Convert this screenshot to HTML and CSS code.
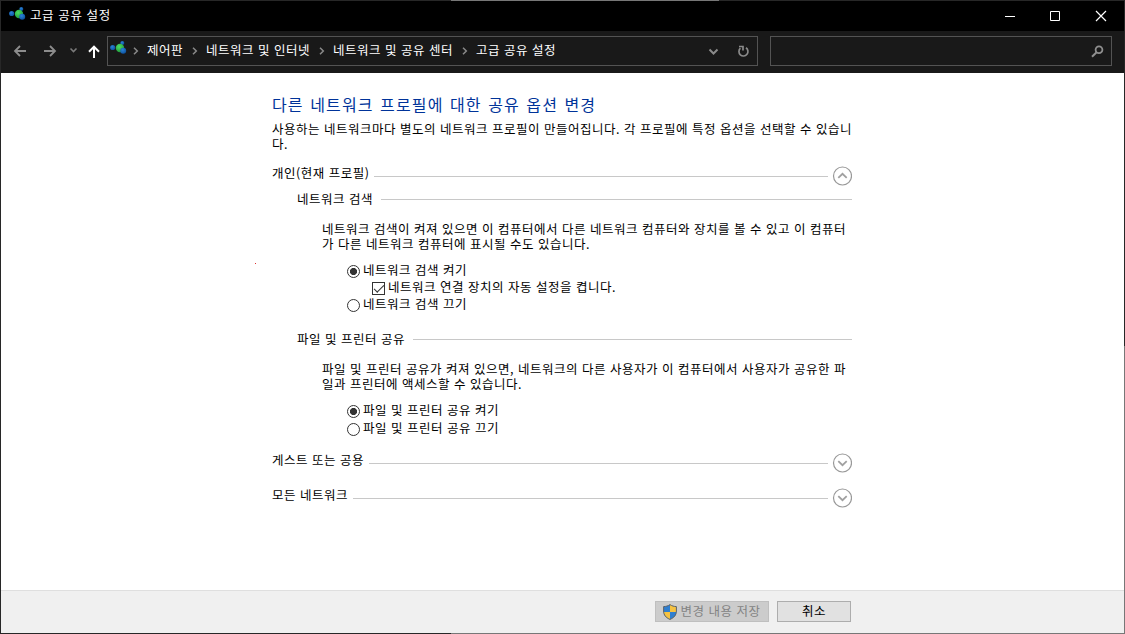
FILE: index.html
```
<!DOCTYPE html>
<html lang="ko">
<head>
    <meta charset="UTF-8">
    <meta name="viewport" content="width=device-width, initial-scale=1.0">
    <title>고급 공유 설정</title>
    <link rel="stylesheet" href="styles.css">
</head>
<body>

    <svg class="symbols" aria-hidden="true">
        <defs>
            <radialGradient id="green" cx=".4" cy=".35" r=".7"><stop offset="0" stop-color="#4fdc62"/><stop offset="1" stop-color="#1c9a3c"/></radialGradient>
            <radialGradient id="blue" cx=".4" cy=".35" r=".7"><stop offset="0" stop-color="#2b83d6"/><stop offset="1" stop-color="#0c4f9c"/></radialGradient>
        </defs>
        <symbol id="network" viewBox="0 0 17 14">
            <circle cx="12.3" cy="2" r="2" fill="url(#blue)"/>
            <circle cx="2.7" cy="6.5" r="2.6" fill="url(#blue)"/>
            <circle cx="10" cy="7" r="4.2" fill="url(#green)"/>
            <circle cx="13.2" cy="9.7" r="3" fill="url(#blue)"/>
        </symbol>
        <symbol id="crumb" viewBox="0 0 6 8">
            <path d="M1 .8 4.3 4 1 7.2" fill="none" stroke="#8a8a8a" stroke-width="1.5"/>
        </symbol>
        <symbol id="down" viewBox="0 0 20 20">
            <circle cx="10.5" cy="10" r="9" fill="#fff" stroke="#999" stroke-width="1.2"/>
            <path d="M6.300 8.200 10.500 12.200 14.700 8.200" fill="none" stroke="#a0a0a0" stroke-width="1.8"/>
        </symbol>
        <symbol id="up" viewBox="0 0 20 20">
            <circle cx="10.5" cy="10" r="9" fill="#fff" stroke="#999" stroke-width="1.2"/>
            <path d="M6.300 11.800 10.500 7.800 14.700 11.800" fill="none" stroke="#a0a0a0" stroke-width="1.8"/>
        </symbol>
    </svg>

    <div class="window">
        <header class="titlebar">
            <svg class="app-icon" width="17" height="14"><use href="#network"/></svg>
            <h1>고급 공유 설정</h1>
            <svg class="controls" width="104" height="12" viewBox="0 0 104 12" fill="none" stroke="#fff">
                <path d="M0 6.5h10M45.5 1.5h9v9h-9z"/>
                <path d="M91 1 101 11M101 1 91 11" stroke-width="1.2"/>
            </svg>
        </header>

        <nav class="toolbar">
            <svg class="arrows" width="88" height="16" viewBox="0 0 88 16" fill="none">
                <path d="M14 8H3M8 3 3 8l5 5M32 8h11M38 3l5 5-5 5" stroke="#8c8c8c" stroke-width="1.8"/>
                <path d="M58.500 5.500 61.500 8.500 64.500 5.500" stroke="#7a7a7a" stroke-width="1.6"/>
                <path d="M82 15V4M77 8.700 82 3.700l5 5" stroke="#fff" stroke-width="2"/>
            </svg>
            <div class="address">
                <svg class="addr-icon" width="17" height="14"><use href="#network"/></svg>
                <svg class="sep" width="6" height="8"><use href="#crumb"/></svg>
                <span>제어판</span>
                <svg class="sep" width="6" height="8"><use href="#crumb"/></svg>
                <span>네트워크 및 인터넷</span>
                <svg class="sep" width="6" height="8"><use href="#crumb"/></svg>
                <span>네트워크 및 공유 센터</span>
                <svg class="sep" width="6" height="8"><use href="#crumb"/></svg>
                <span>고급 공유 설정</span>
                <svg class="addr-tools" width="44" height="28" viewBox="0 0 44 28" fill="none" stroke="#8a8a8a">
                    <path d="M1.500 12.500 5.500 16.500 9.500 12.500" stroke-width="2"/>
                    <path d="M38 10.800A4.500 4.500 0 1 1 32.400 11.200M31 9.500h4v4" stroke-width="1.7"/>
                </svg>
            </div>
            <div class="search">
                <svg width="13" height="13" viewBox="0 0 13 13" fill="none" stroke="#8f8f8f">
                    <circle cx="8" cy="4.8" r="3.4" stroke-width="1.8"/>
                    <path d="M5.6 7.2 1 11.8" stroke-width="2"/>
                </svg>
            </div>
        </nav>

        <main>
            <div class="content">
                <h2>다른 네트워크 프로필에 대한 공유 옵션 변경</h2>
                <p class="intro">사용하는 네트워크마다 별도의 네트워크 프로필이 만들어집니다. 각 프로필에 특정 옵션을 선택할 수 있습니<br>다.</p>

                <!-- 개인 프로필 -->
                <div class="profile">
                    <span>개인(현재 프로필)</span><i></i>
                    <svg width="20" height="20"><use href="#up"/></svg>
                </div>

                <section>
                    <div class="group"><span>네트워크 검색</span><i></i></div>
                    <p>네트워크 검색이 켜져 있으면 이 컴퓨터에서 다른 네트워크 컴퓨터와 장치를 볼 수 있고 이 컴퓨터<br>가 다른 네트워크 컴퓨터에 표시될 수도 있습니다.</p>
                    <div class="options tight">
                        <label><input type="radio" name="discovery" checked>네트워크 검색 켜기</label>
                        <label class="sub"><input type="checkbox" checked>네트워크 연결 장치의 자동 설정을 켭니다.</label>
                        <label><input type="radio" name="discovery">네트워크 검색 끄기</label>
                    </div>
                </section>

                <section>
                    <div class="group"><span>파일 및 프린터 공유</span><i></i></div>
                    <p>파일 및 프린터 공유가 켜져 있으면, 네트워크의 다른 사용자가 이 컴퓨터에서 사용자가 공유한 파<br>일과 프린터에 액세스할 수 있습니다.</p>
                    <div class="options">
                        <label><input type="radio" name="sharing" checked>파일 및 프린터 공유 켜기</label>
                        <label><input type="radio" name="sharing">파일 및 프린터 공유 끄기</label>
                    </div>
                </section>

                <!-- 접힌 프로필 -->
                <div class="profile">
                    <span>게스트 또는 공용</span><i></i>
                    <svg width="20" height="20"><use href="#down"/></svg>
                </div>
                <div class="profile">
                    <span>모든 네트워크</span><i></i>
                    <svg width="20" height="20"><use href="#down"/></svg>
                </div>
            </div>
        </main>

        <footer>
            <button class="save" disabled>
                <svg width="14" height="16" viewBox="0 0 14 16">
                    <path d="M7 .5C5 2 3 2.500.6 2.600V7C.6 11 3 13.800 7 15.500Z" fill="#2f7fd0"/>
                    <path d="M7 .5C9 2 11 2.500 13.400 2.600V7C13.400 11 11 13.800 7 15.500Z" fill="#f5c242"/>
                    <path d="M.6 8H7v7.500C3.200 13.800.900 11.500.6 8Z" fill="#f5c242"/>
                    <path d="M13.400 8H7v7.500C10.800 13.800 13.100 11.500 13.400 8Z" fill="#2f7fd0"/>
                    <path d="M7 .6C5 2 3 2.500.6 2.600V7C.6 11 3 13.800 7 15.400 11 13.800 13.400 11 13.400 7V2.600C11 2.500 9 2 7 .6Z" fill="none" stroke="#5c6368"/>
                </svg>
                <span>변경 내용 저장</span>
            </button>
            <button><span>취소</span></button>
        </footer>
    </div>

</body>
</html>
```
FILE: styles.css
```
* {
    box-sizing: border-box;
}
body {
    margin: 0;
    font-family: "Noto Sans CJK KR", sans-serif;
    font-size: 12.5px;
    line-height: 15px;
    letter-spacing: 0.5px;
    color: #000;
    white-space: nowrap;
}
h1, h2, p {
    margin: 0;
    font-size: 12.5px;
    font-weight: normal;
}
svg {
    display: block;
    flex: none;
}
.symbols {
    position: absolute;
    width: 0;
    height: 0;
}
.window {
    display: flex;
    flex-direction: column;
    width: 1125px;
    height: 634px;
    padding: 1px;
    /* borde: tramos claros arriba, a la derecha y abajo */
    background:
        linear-gradient(#777, #777) 451px 0 / 268px 1px no-repeat,
        linear-gradient(#777, #777) 1124px 346px / 1px 288px no-repeat,
        linear-gradient(#777, #777) 451px 633px / 674px 1px no-repeat,
        #272727;
}

/* Barra de título */
.titlebar {
    display: flex;
    align-items: center;
    height: 30px;
    padding: 0 15px 0 8px;
    background: #000;
    color: #fff;
}
.titlebar h1 {
    margin-left: 4px;
    padding-bottom: 3px;
    letter-spacing: 0.6px;
}
.app-icon {
    margin-bottom: 4px;
}
.controls {
    margin-left: auto;
}

/* Navegación */
.toolbar {
    display: flex;
    height: 42px;
    padding: 5px 12px 7px 11px;
    background: #191919;
    color: #fff;
}
.arrows {
    margin-top: 7px;
}
.address {
    display: flex;
    align-items: center;
    width: 651px;
    margin-left: 7px;
    padding-left: 2px;
    padding-bottom: 2px;
    border: 1px solid #535353;
}
.address span {
    padding-bottom: 2px;
}
.addr-icon {
    margin-bottom: 4px;
}
.sep {
    margin: 1px 8px 0 9px;
}
.addr-icon + .sep {
    margin-left: 6px;
}
.addr-tools {
    margin-left: auto;
    margin-right: 5px;
    margin-top: 2px;
}
.search {
    display: flex;
    align-items: center;
    justify-content: flex-end;
    flex: 1;
    margin-left: 12px;
    padding-right: 7px;
    border: 1px solid #535353;
}

/* Contenido */
main {
    position: relative;
    flex: 1;
    background: #fff;
}
main::before {
    content: "";
    position: absolute;
    left: 254px;
    top: 190px;
    width: 1px;
    height: 1px;
    background: #e03030;
}
.content {
    width: 580px;
    margin-left: 271px;
    padding-top: 20px;
}
h2 {
    font-size: 16px;
    line-height: 22px;
    letter-spacing: 1.15px;
    word-spacing: 0.8px;
    color: #003399;
}
.intro {
    margin-top: 6px;
}
.profile {
    display: flex;
    height: 20px;
    margin-top: 15px;
}
.profile span {
    margin-top: -1px;
}
.profile i, .group i {
    flex: 1;
    height: 1px;
    background: #c8c8c8;
}
.profile i {
    margin: 10px 4px 0 5px;
}
.group {
    display: flex;
    align-items: center;
    height: 15px;
    padding-left: 25px;
}
.group span {
    padding-bottom: 2px;
}
.group i {
    margin-left: 8px;
}
section {
    height: 140px;
    padding-top: 6px;
}
section + section {
    height: 112px;
}
section p {
    margin: 14px 0 0 50px;
}
.options {
    padding: 11px 0 0 75px;
}
label {
    display: flex;
    height: 18px;
    line-height: 16px;
}
.tight label {
    height: 17px;
}
.sub {
    padding-left: 25px;
}
input {
    appearance: none;
    flex: none;
    width: 13px;
    height: 13px;
    margin: 3px 3px 0 0;
    border: 1px solid #333;
    background: #fff;
}
input[type="radio"] {
    border-radius: 50%;
}
input[type="radio"]:checked {
    background: radial-gradient(circle, #333 3.2px, #fff 3.9px);
}
input[type="checkbox"]:checked::before {
    content: "";
    display: block;
    width: 9px;
    height: 4px;
    margin: 2px 0 0 1px;
    border: solid #333;
    border-width: 0 0 1.3px 1.3px;
    transform: rotate(-45deg);
}

/* Botones */
footer {
    display: flex;
    justify-content: flex-end;
    gap: 8px;
    height: 43px;
    padding: 10px 273px 0 0;
    border-top: 1px solid #dfdfdf;
    background: #f0f0f0;
}
button {
    display: flex;
    align-items: center;
    justify-content: center;
    width: 74px;
    height: 21px;
    padding: 0;
    border: 1px solid #adadad;
    background: #e1e1e1;
    font: inherit;
    letter-spacing: inherit;
    color: #000;
}
button span {
    padding-bottom: 2px;
}
.save {
    gap: 3px;
    width: 114px;
    border-color: #bfbfbf;
    background: #ccc;
    color: #838383;
}
```
